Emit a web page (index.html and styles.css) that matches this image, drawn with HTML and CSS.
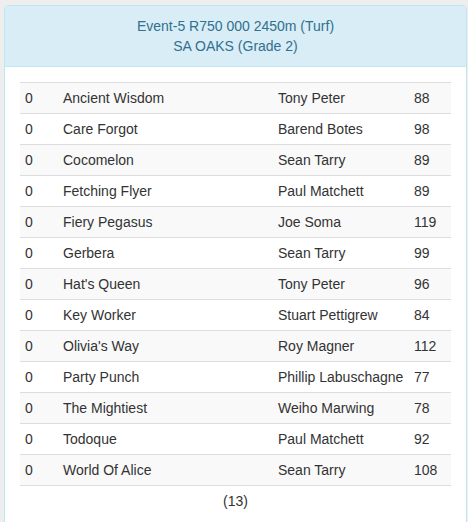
FILE: index.html
```html
<!DOCTYPE html>
<html>
<head>
<meta charset="utf-8">
<link rel="stylesheet" href="styles.css">
</head>
<body>
<div class="panel">
  <div class="panel-heading">
    <div>Event-5 R750 000 2450m (Turf)</div>
    <div>SA OAKS (Grade 2)</div>
  </div>
  <div class="panel-body">
    <table class="runners">
      <colgroup><col class="c1"><col class="c2"><col class="c3"><col class="c4"></colgroup>
      <tbody>
        <tr><td>0</td><td>Ancient Wisdom</td><td>Tony Peter</td><td>88</td></tr>
        <tr><td>0</td><td>Care Forgot</td><td>Barend Botes</td><td>98</td></tr>
        <tr><td>0</td><td>Cocomelon</td><td>Sean Tarry</td><td>89</td></tr>
        <tr><td>0</td><td>Fetching Flyer</td><td>Paul Matchett</td><td>89</td></tr>
        <tr><td>0</td><td>Fiery Pegasus</td><td>Joe Soma</td><td>119</td></tr>
        <tr><td>0</td><td>Gerbera</td><td>Sean Tarry</td><td>99</td></tr>
        <tr><td>0</td><td>Hat's Queen</td><td>Tony Peter</td><td>96</td></tr>
        <tr><td>0</td><td>Key Worker</td><td>Stuart Pettigrew</td><td>84</td></tr>
        <tr><td>0</td><td>Olivia's Way</td><td>Roy Magner</td><td>112</td></tr>
        <tr><td>0</td><td>Party Punch</td><td>Phillip Labuschagne</td><td>77</td></tr>
        <tr><td>0</td><td>The Mightiest</td><td>Weiho Marwing</td><td>78</td></tr>
        <tr><td>0</td><td>Todoque</td><td>Paul Matchett</td><td>92</td></tr>
        <tr><td>0</td><td>World Of Alice</td><td>Sean Tarry</td><td>108</td></tr>
      </tbody>
    </table>
    <div class="count">(13)</div>
  </div>
</div>
</body>
</html>
```
FILE: styles.css
```css
html, body {
  margin: 0;
  background: #eeeeee;
}
body {
  padding: 5px 0 0 4px;
  font-family: "Liberation Sans", Arial, sans-serif;
  font-size: 14px;
  line-height: 20px;
  color: #333333;
}
.panel {
  width: 463px;
  box-sizing: border-box;
  background: #ffffff;
  border: 1px solid #bce8f1;
  border-radius: 4px;
}
.panel-heading {
  background: #d9edf7;
  color: #31708f;
  border-bottom: 1px solid #bce8f1;
  border-radius: 3px 3px 0 0;
  padding: 10px 15px;
  text-align: center;
}
.panel-body {
  padding: 15px;
}
.runners {
  width: 100%;
  border-collapse: collapse;
  border-spacing: 0;
  table-layout: fixed;
}
.c1 { width: 38px; }
.c2 { width: 215px; }
.c3 { width: 136px; }
.c4 { width: auto; }
.runners td {
  padding: 5px;
  border-top: 1px solid #dddddd;
  white-space: nowrap;
  overflow: visible;
}
.runners tr:last-child td {
  border-bottom: 1px solid #dddddd;
}
.runners tr:nth-child(odd) td {
  background: #f9f9f9;
}
.count {
  text-align: center;
  padding-top: 5px;
}
```
